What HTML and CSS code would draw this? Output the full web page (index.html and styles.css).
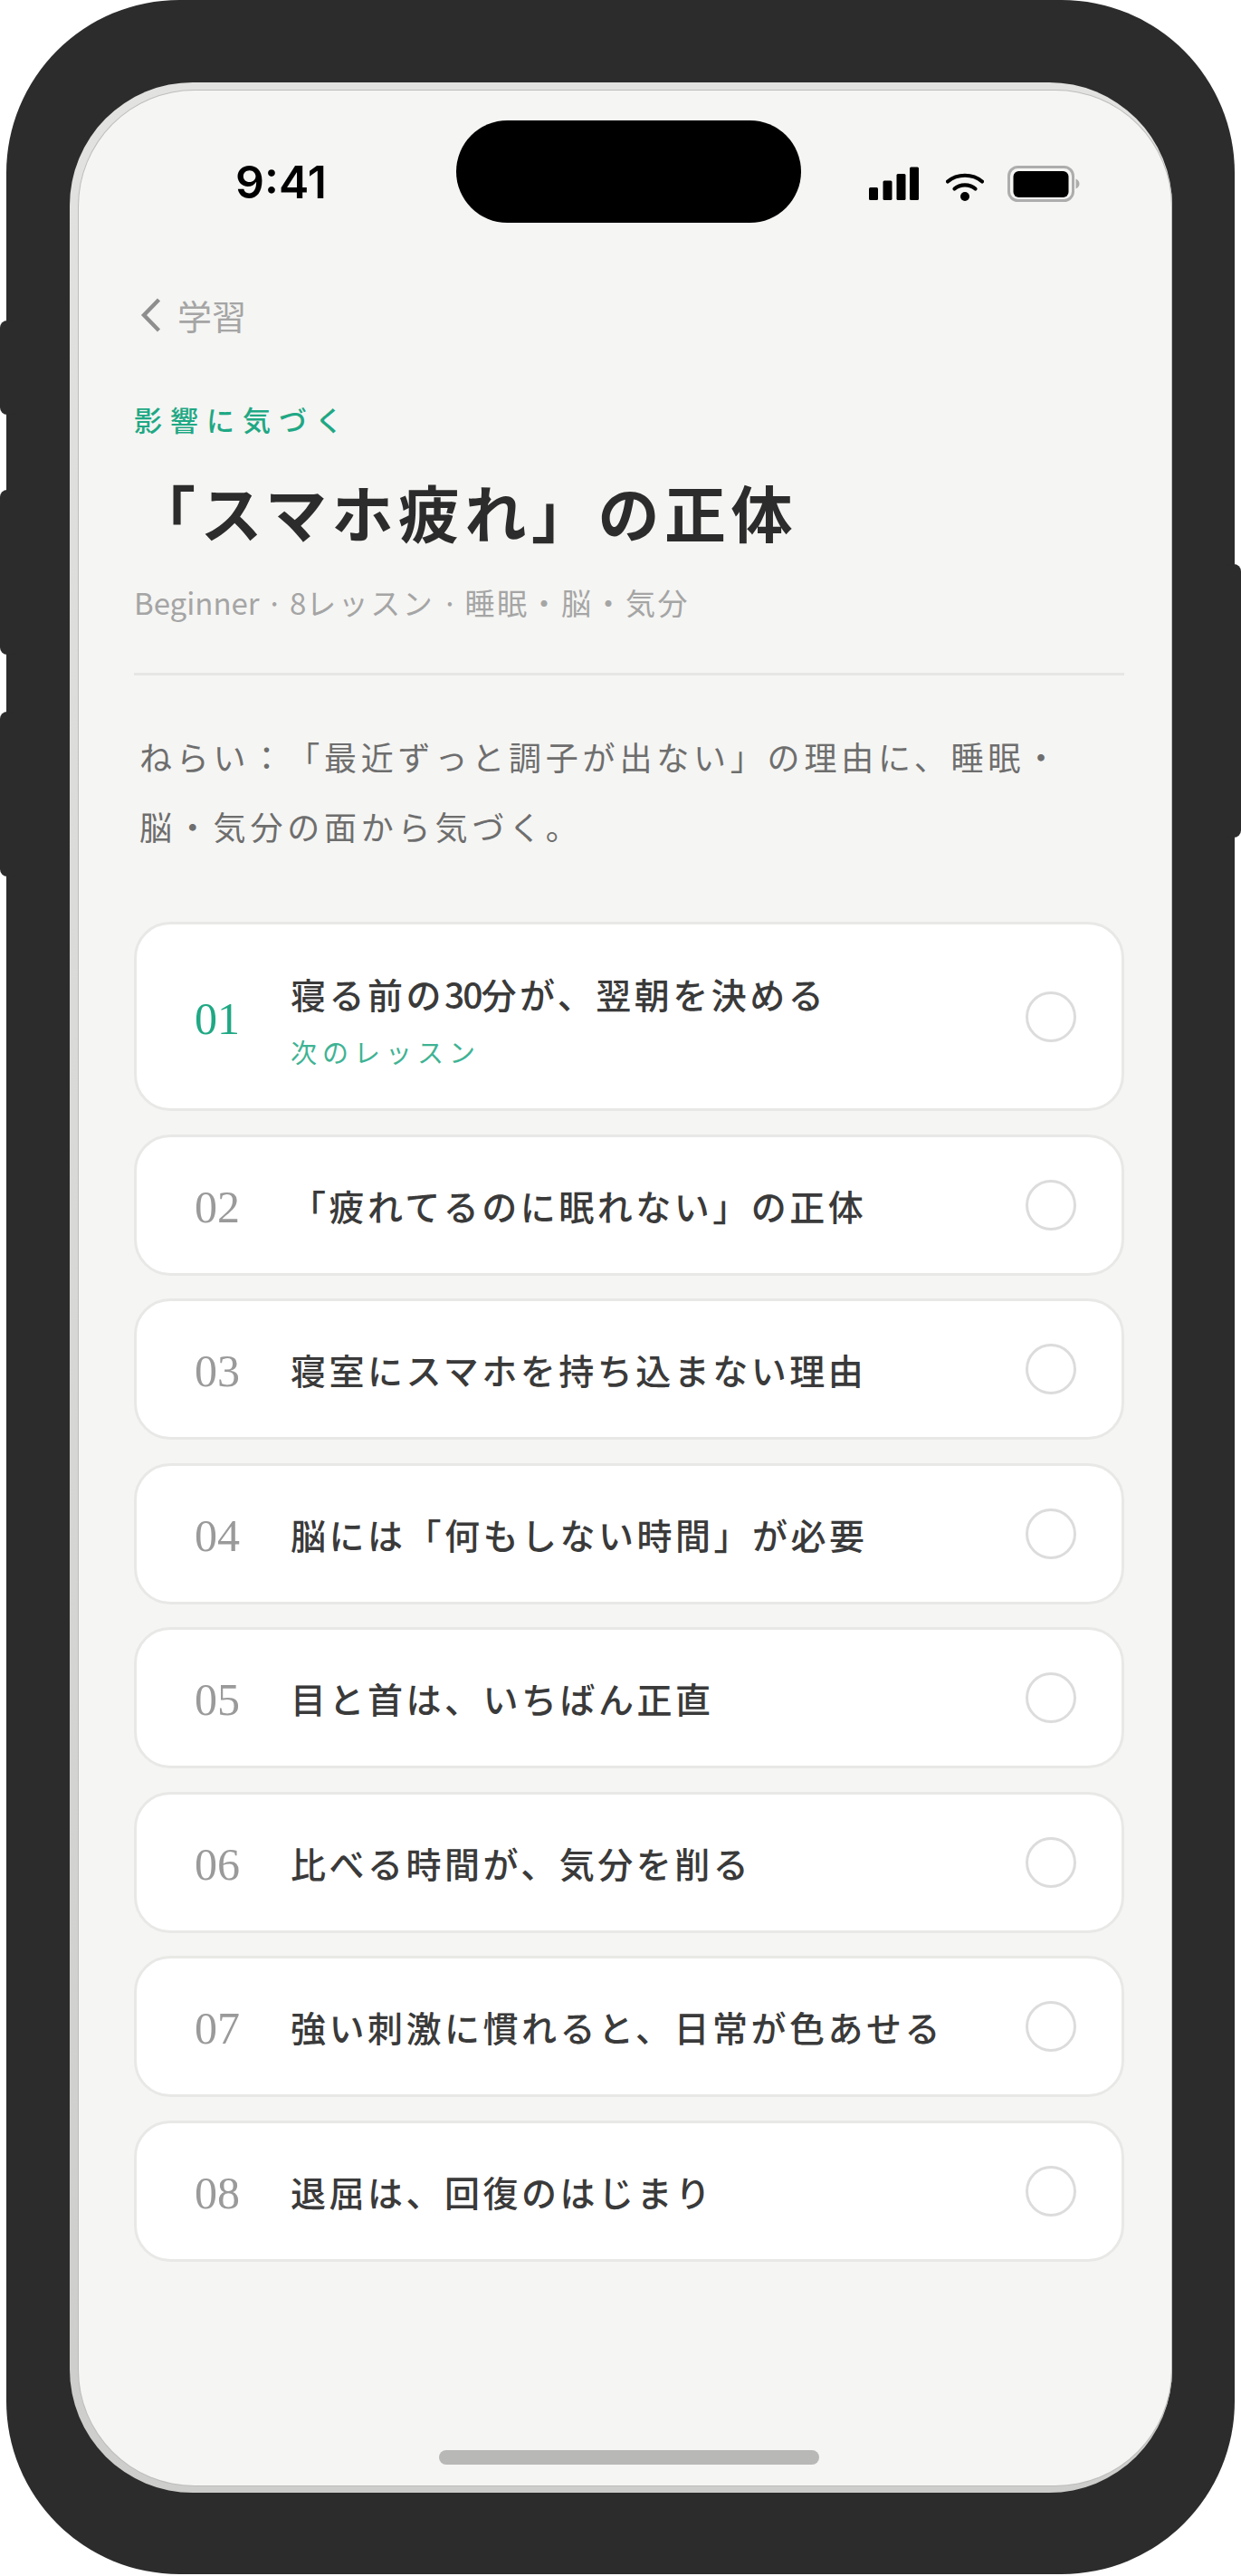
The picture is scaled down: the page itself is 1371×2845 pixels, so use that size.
FILE: index.html
```html
<!DOCTYPE html>
<html lang="ja">
<head>
	<meta charset="UTF-8">
	<title>「スマホ疲れ」の正体</title>
	<link rel="stylesheet" href="styles.css">
</head>
<body>

	<div class="phone">
		<span class="sideBtn btnMute"></span>
		<span class="sideBtn btnUp"></span>
		<span class="sideBtn btnDown"></span>
		<span class="sideBtn btnPower"></span>
		<div class="screenEdge">
			<div class="screen">
				<div class="statusBar">
					<span class="time">9:41</span>
					<span class="island"></span>
					<div class="statusIcons">
						<svg class="iconSignal" width="55" height="38" viewBox="0 0 55 38">
							<rect x="0" y="23" width="10" height="14" rx="1.5"/>
							<rect x="15.5" y="15.5" width="10" height="21.5" rx="1.5"/>
							<rect x="30.5" y="8" width="10" height="29" rx="1.5"/>
							<rect x="45" y="0.5" width="10" height="36.5" rx="1.5"/>
						</svg>
						<svg class="iconWifi" width="42" height="33" viewBox="0 0 42 33">
							<path d="M2 11.5C12.5 2.5 29.5 2.5 40 11.5" fill="none" stroke="#000" stroke-width="4.2" stroke-linecap="round"/>
							<path d="M9.5 19.5C15.5 14 26.5 14 32.5 19.5" fill="none" stroke="#000" stroke-width="4.2" stroke-linecap="round"/>
							<circle cx="21" cy="28" r="5"/>
						</svg>
						<svg class="iconBattery" width="80" height="40" viewBox="0 0 80 40">
							<rect x="1.5" y="1.5" width="71" height="37" rx="10" fill="none" stroke="#adadad" stroke-width="3"/>
							<rect x="6.5" y="6" width="61" height="29" rx="6"/>
							<path d="M75.5 14.5C78 15.5 79.5 17.5 79.5 20C79.5 22.5 78 24.5 75.5 25.5Z" fill="#adadad"/>
						</svg>
					</div>
				</div>

				<div class="content">
					<div class="backLink">
						<svg class="backIcon" width="24" height="40" viewBox="0 0 24 40">
							<path d="M20.5 3L4 20L20.5 37" fill="none" stroke="#8e8e8e" stroke-width="4.4"/>
						</svg>
						<span>学習</span>
					</div>
					<p class="category">影響に気づく</p>
					<h1 class="courseTitle">「スマホ疲れ」の正体</h1>
					<p class="courseMeta"><span class="metaLatin">Beginner · 8</span>レッスン<span class="metaLatin"> · </span>睡眠・脳・気分</p>
					<div class="divider"></div>
					<p class="courseGoal">ねらい：「最近ずっと調子が出ない」の理由に、睡眠・<br>脳・気分の面から気づく。</p>

					<ul class="lessonList">
						<li class="lesson lessonNext">
							<span class="lessonNum">01</span>
							<div class="lessonText">
								<p class="lessonTitle">寝る前の<span class="titleDigits">30</span>分が、翌朝を決める</p>
								<p class="lessonSub">次のレッスン</p>
							</div>
							<span class="lessonCheck"></span>
						</li>
						<li class="lesson">
							<span class="lessonNum">02</span>
							<div class="lessonText"><p class="lessonTitle">「疲れてるのに眠れない」の正体</p></div>
							<span class="lessonCheck"></span>
						</li>
						<li class="lesson">
							<span class="lessonNum">03</span>
							<div class="lessonText"><p class="lessonTitle">寝室にスマホを持ち込まない理由</p></div>
							<span class="lessonCheck"></span>
						</li>
						<li class="lesson">
							<span class="lessonNum">04</span>
							<div class="lessonText"><p class="lessonTitle">脳には「何もしない時間」が必要</p></div>
							<span class="lessonCheck"></span>
						</li>
						<li class="lesson">
							<span class="lessonNum">05</span>
							<div class="lessonText"><p class="lessonTitle">目と首は、いちばん正直</p></div>
							<span class="lessonCheck"></span>
						</li>
						<li class="lesson">
							<span class="lessonNum">06</span>
							<div class="lessonText"><p class="lessonTitle">比べる時間が、気分を削る</p></div>
							<span class="lessonCheck"></span>
						</li>
						<li class="lesson">
							<span class="lessonNum">07</span>
							<div class="lessonText"><p class="lessonTitle">強い刺激に慣れると、日常が色あせる</p></div>
							<span class="lessonCheck"></span>
						</li>
						<li class="lesson">
							<span class="lessonNum">08</span>
							<div class="lessonText"><p class="lessonTitle">退屈は、回復のはじまり</p></div>
							<span class="lessonCheck"></span>
						</li>
					</ul>
				</div>

				<div class="homeBar"></div>
			</div>
		</div>
	</div>

</body>
</html>
```

FILE: styles.css
```css
*{
	margin: 0px;
	padding: 0px;
	list-style: none;
	box-sizing: border-box;
}
body{
	background: #fff;
	font-family: "Noto Sans CJK JP", "Noto Sans", sans-serif;
	text-spacing-trim: space-all;
}

/* device frame */
.phone{
	position: relative;
	width: 1357px;
	height: 2843px;
	margin-left: 7px;
	padding: 91px 69px 90px 70px;
	background: #2c2c2c;
	border-radius: 191px;
}
.sideBtn{
	position: absolute;
	width: 20px;
	background: #2c2c2c;
	border-radius: 8px;
}
.btnMute{
	left: -7px;
	top: 354px;
	height: 104px;
}
.btnUp{
	left: -7px;
	top: 541px;
	height: 182px;
}
.btnDown{
	left: -7px;
	top: 786px;
	height: 182px;
}
.btnPower{
	right: -7px;
	top: 623px;
	height: 302px;
}
.screenEdge{
	height: 100%;
	padding: 9px 1px 8px 10px;
	background: linear-gradient(#e2e2e0, #cdcdcb);
	border-radius: 136px;
}
.screen{
	display: flex;
	flex-direction: column;
	height: 100%;
	background: #f5f5f3;
	border-radius: 128px;
	box-shadow: 0 0 0 1px #bdbdbb;
}

/* status bar */
.statusBar{
	display: flex;
	align-items: flex-start;
	height: 146px;
	padding-top: 33px;
}
.time{
	width: 173px;
	margin: 38px 0 0 173px;
	font-family: Inter, "Liberation Sans", sans-serif;
	font-size: 50px;
	line-height: 60px;
	font-weight: 600;
	color: #000;
}
.island{
	width: 381px;
	height: 113px;
	margin-left: 71px;
	background: #000;
	border-radius: 57px;
}
.statusIcons{
	display: flex;
	align-items: flex-end;
	margin: 50px 0 0 75px;
}
.iconBattery{
	margin-left: 26px;
	margin-bottom: -1px;
}
.iconWifi{
	margin-left: 30px;
}

/* header */
.content{
	padding: 0 52px 0 61px;
}
.backLink{
	display: flex;
	align-items: center;
	height: 48px;
	margin-top: 78px;
	padding-left: 7px;
	color: #a5a5a5;
	font-size: 38px;
	line-height: 48px;
}
.backLink span{
	margin-left: 17px;
}
.category{
	margin-top: 69px;
	color: #1fa884;
	font-size: 31px;
	line-height: 44px;
	font-weight: 500;
	letter-spacing: 9px;
}
.courseTitle{
	margin-top: 35px;
	color: #2c2c2c;
	font-size: 68px;
	line-height: 90px;
	font-weight: 700;
	letter-spacing: 5.5px;
}
.courseMeta{
	margin-top: 32px;
	color: #a5a5a5;
	font-size: 33px;
	line-height: 46px;
	letter-spacing: 2.5px;
}
.metaLatin{
	letter-spacing: 0px;
}
.divider{
	height: 3px;
	margin-top: 55px;
	background: #e6e6e4;
}
.courseGoal{
	margin-top: 51px;
	padding-left: 6px;
	color: #6e6e6e;
	font-size: 36px;
	line-height: 77px;
	letter-spacing: 4.8px;
}

/* lessons */
.lessonList{
	display: flex;
	flex-direction: column;
	gap: 25.5px;
	margin-top: 67px;
}
.lesson{
	display: flex;
	align-items: center;
	height: 156px;
	padding: 0 50px 0 64px;
	background: #fff;
	border: 3px solid #e8e8e6;
	border-radius: 40px;
}
.lessonNext{
	height: 209px;
}
.lessonNum{
	width: 106px;
	flex-shrink: 0;
	padding-top: 4px;
	color: #9a9a9a;
	font-family: "Liberation Serif", serif;
	font-size: 50px;
	line-height: 60px;
}
.lessonNext .lessonNum{
	color: #1fa884;
}
.lessonText{
	flex: 1;
}
.lessonTitle{
	color: #3a3a3a;
	font-size: 39px;
	line-height: 56px;
	font-weight: 500;
	letter-spacing: 3.5px;
}
.titleDigits{
	letter-spacing: -2px;
}
.lessonNext .lessonTitle{
	margin-top: 4px;
}
.lessonSub{
	margin-top: 16px;
	color: #3fb394;
	font-size: 29px;
	line-height: 40px;
	letter-spacing: 6px;
}
.lessonCheck{
	width: 56px;
	height: 56px;
	flex-shrink: 0;
	border: 3.5px solid #dcdcdc;
	border-radius: 50%;
}
.homeBar{
	width: 420px;
	height: 16px;
	margin: auto 0 23px 398px;
	background: #b8b8b6;
	border-radius: 8px;
}
```
